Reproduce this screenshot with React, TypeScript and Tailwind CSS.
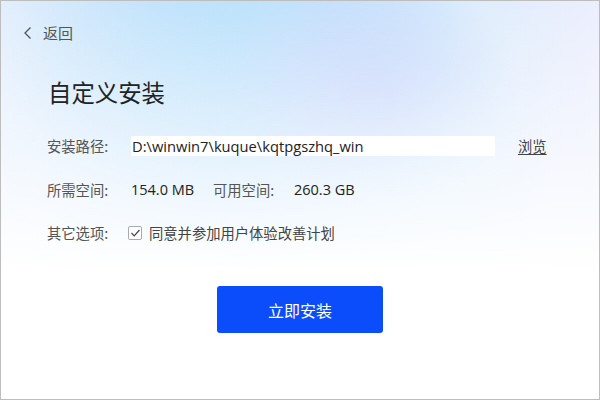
export default function App() {
  return (
    <div className="w-[600px] h-[400px] border border-[#bdbdbd] flex flex-col font-['Noto_Sans_CJK_SC',sans-serif] bg-[linear-gradient(180deg,rgba(255,255,255,0)_0%,rgba(255,255,255,0.55)_38%,#fff_68%),radial-gradient(ellipse_at_62%_22%,#c7d6fb_0%,rgba(199,214,251,0)_28%),radial-gradient(ellipse_at_38%_6%,#bde2fb_0%,rgba(189,226,251,0)_45%),linear-gradient(90deg,#e4effd_0%,#c9e4fb_38%,#d9edfb_72%,#eceefd_100%)]">
      <div className="mt-[20px] h-[24px] pl-[22px] flex items-center">
        <svg width="10" height="14" viewBox="0 0 10 14" fill="none">
          <path d="M7.5 1.5 L2 7 L7.5 12.5" stroke="#555" strokeWidth="1.3" />
        </svg>
        <span className="ml-[10px] text-[15px] text-[#555]">返回</span>
      </div>

      <div className="mt-[32px] pl-[47px] h-[32px] flex items-center text-[23.4px] text-[#222]">
        自定义安装
      </div>

      <div className="mt-[27px] pl-[46px] flex flex-col gap-[23.5px] text-[14.3px]">
        <div className="h-[20px] flex items-center">
          <span className="w-[84px] text-[#555]">安装路径:</span>
          <div className="w-[364px] h-[20px] bg-white flex items-center pl-[1px] text-[#222] text-[14.7px] font-['Open_Sans','Noto_Sans_CJK_SC',sans-serif]">
            D:\winwin7\kuque\kqtpgszhq_win
          </div>
          <span className="ml-[23px] text-[#444] underline underline-offset-2">浏览</span>
        </div>

        <div className="h-[20px] flex items-center">
          <span className="w-[84px] text-[#555]">所需空间:</span>
          <span className="w-[82px] text-[#222] text-[14.5px] font-['Open_Sans','Noto_Sans_CJK_SC',sans-serif]">154.0 MB</span>
          <span className="w-[81px] text-[#555]">可用空间:</span>
          <span className="text-[#222] text-[14.5px] font-['Open_Sans','Noto_Sans_CJK_SC',sans-serif]">260.3 GB</span>
        </div>

        <div className="h-[20px] flex items-center">
          <span className="w-[81px] text-[#555]">其它选项:</span>
          <span className="w-[14px] h-[14px] bg-white border border-[#aaa] rounded-[2px] flex items-center justify-center">
            <svg width="11" height="10" viewBox="0 0 11 10" fill="none">
              <path d="M1.5 5 L4.2 7.8 L9.5 2" stroke="#444" strokeWidth="1.2" />
            </svg>
          </span>
          <span className="ml-[7px] text-[#444]">同意并参加用户体验改善计划</span>
        </div>
      </div>

      <button className="mt-[43px] mx-auto w-[166px] h-[47px] rounded-[3px] bg-[#0b4dfb] text-white text-[16px]">
        立即安装
      </button>
    </div>
  );
}
